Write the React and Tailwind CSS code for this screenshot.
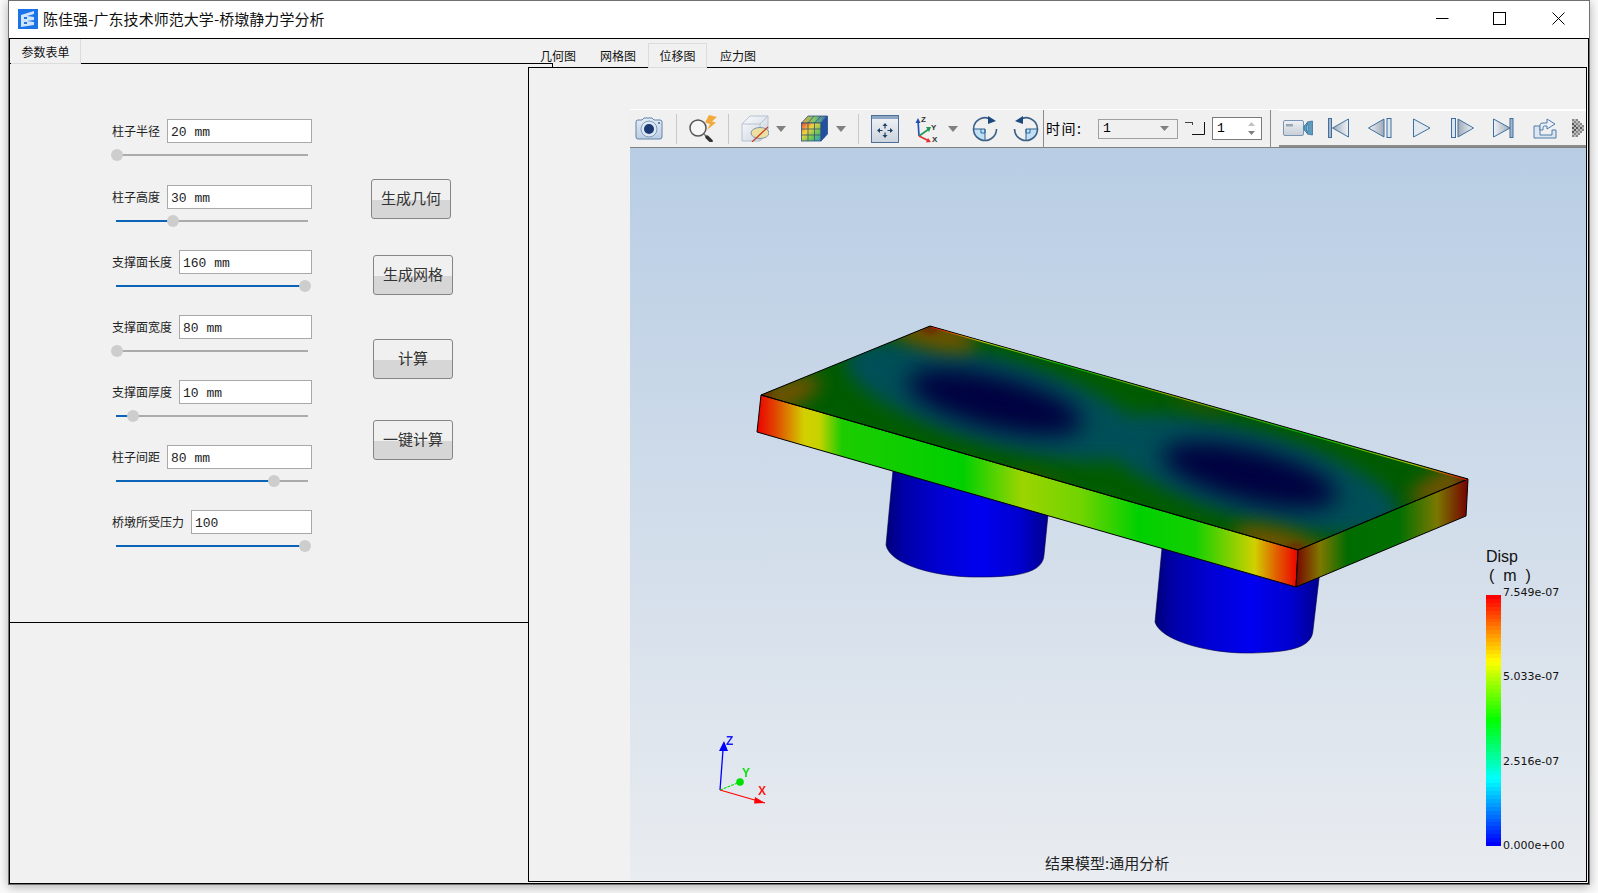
const CJK = { fontFamily: '"Noto Sans CJK SC", "Liberation Sans", sans-serif' };
const MONO = { fontFamily: '"Liberation Mono", "Noto Sans CJK SC", monospace' };

const rows = [
  { label: '柱子半径', value: '20 mm', handle: 1, h: 'h-[66px]' },
  { label: '柱子高度', value: '30 mm', handle: 57, h: 'h-[65px]' },
  { label: '支撑面长度', value: '160 mm', handle: 189, h: 'h-[65px]' },
  { label: '支撑面宽度', value: '80 mm', handle: 1, h: 'h-[65px]' },
  { label: '支撑面厚度', value: '10 mm', handle: 17, h: 'h-[65px]' },
  { label: '柱子间距', value: '80 mm', handle: 158, h: 'h-[65px]' },
  { label: '桥墩所受压力', value: '100', handle: 189, h: 'h-[65px]' },
];

function ParamRow({ label, value, handle, h }) {
  return (
    <div className={`${h} flex flex-col`}>
      <div className="flex h-[24px] items-center gap-[7px]">
        <span className="text-[12px] leading-none text-[#222] whitespace-nowrap">{label}</span>
        <div className="flex h-[24px] flex-1 items-center border border-[#a8a8a8] bg-white pl-[3px] pt-[3px] text-[13px] text-[#222]" style={MONO}>
          {value}
        </div>
      </div>
      <div className="relative ml-[4px] mt-[11px] h-[2px] w-[192px] bg-[#ababab]">
        <div className="h-[2px] bg-[#0d63b5]" style={{ width: handle }} />
        <div className="absolute top-[-5px] h-[12px] w-[12px] rounded-full bg-[#cdcdcd]" style={{ left: handle - 6 }} />
      </div>
    </div>
  );
}

function Btn({ children, className }) {
  return (
    <div className={`flex h-[40px] w-[80px] items-center justify-center rounded-[3px] border border-[#858585] bg-[linear-gradient(#f0f0f0_52%,#d6d6d6_52%)] pb-[2px] text-[15px] text-[#333] ${className}`}>
      {children}
    </div>
  );
}

function AppIcon() {
  return (
    <svg width="20" height="20" viewBox="0 0 20 20" className="shrink-0">
      <rect width="20" height="20" fill="#1a73e8" />
      <path d="M3 6 L16 2 V5 L9 7 L16 8 V11 L9 12 L16 13 V16 L3 18 Z" fill="#cfe3fb" />
      <path d="M6 8 H9 V10 H6 Z M6 13 H9 V15 H6 Z" fill="#1a73e8" />
    </svg>
  );
}

function Sep({ className, dark }) {
  return <div className={`h-[30px] w-px shrink-0 ${dark ? 'bg-[#8a8a8a]' : 'bg-[#c9c9c9]'} ${className}`} />;
}

function Caret({ className }) {
  return (
    <svg width="10" height="6" viewBox="0 0 10 6" className={`shrink-0 ${className}`}>
      <path d="M0 0 H10 L5 6 Z" fill="#808080" />
    </svg>
  );
}

function CameraIcon({ className }) {
  return (
    <svg width="28" height="23" viewBox="0 0 28 23" className={`shrink-0 ${className}`}>
      <defs>
        <linearGradient id="cam" x1="0" y1="0" x2="0" y2="1">
          <stop offset="0" stopColor="#e6edf6" />
          <stop offset="1" stopColor="#bccde2" />
        </linearGradient>
      </defs>
      <path d="M1 5 Q1 3 3 3 H7 L9 1 H17 L19 3 H25 Q27 3 27 5 V20 Q27 22 25 22 H3 Q1 22 1 20 Z" fill="url(#cam)" stroke="#5f83ab" />
      <circle cx="14" cy="12" r="8" fill="#dce7f3" stroke="#7c9cc0" />
      <circle cx="14" cy="12" r="5" fill="#1b3a72" />
      <rect x="23" y="5" width="2" height="2" fill="#5f83ab" />
    </svg>
  );
}

function SearchIcon({ className }) {
  return (
    <svg width="29" height="27" viewBox="0 0 29 27" className={`shrink-0 ${className}`}>
      <circle cx="10" cy="13" r="8" fill="#f6f6f6" stroke="#555" strokeWidth="1.5" />
      <path d="M16 19 L19 22" stroke="#777" strokeWidth="1.5" />
      <path d="M19 22 L23 26" stroke="#333" strokeWidth="3.5" strokeLinecap="round" />
      <path d="M21 0 L29 2 L24 6.5 L28 7.5 L19 15 L22 9 L17 7.5 Z" fill="#f2aa3c" />
    </svg>
  );
}

function CubeIcon({ className }) {
  return (
    <svg width="28" height="27" viewBox="0 0 28 27" className={`shrink-0 ${className}`}>
      <defs>
        <linearGradient id="cube" x1="0" y1="0" x2="1" y2="1">
          <stop offset="0" stopColor="#fbfcfd" />
          <stop offset="1" stopColor="#c9d2dd" />
        </linearGradient>
      </defs>
      <path d="M1 9 L9 1 H27 V18 L19 26 H1 Z" fill="url(#cube)" stroke="#b6c2d0" />
      <path d="M1 9 H19 V26 M19 9 L27 1" fill="none" stroke="#b6c2d0" />
      <ellipse cx="19" cy="18" rx="9" ry="5.5" fill="#ecdf9f" stroke="#7f96ae" />
      <path d="M11 27 L27 12" stroke="#c9452a" strokeWidth="1.3" />
    </svg>
  );
}

function ColorCubeIcon({ className }) {
  return (
    <svg width="27" height="27" viewBox="0 0 27 27" className={`shrink-0 ${className}`}>
      <defs>
        <linearGradient id="cc" x1="0" y1="0" x2="1" y2="1">
          <stop offset="0" stopColor="#e8443a" />
          <stop offset="0.35" stopColor="#f2d23a" />
          <stop offset="0.7" stopColor="#62c45a" />
          <stop offset="1" stopColor="#2a8fd8" />
        </linearGradient>
        <linearGradient id="ct" x1="0" y1="0" x2="1" y2="0">
          <stop offset="0" stopColor="#e8a03a" />
          <stop offset="0.5" stopColor="#7bc96c" />
          <stop offset="1" stopColor="#2e63c4" />
        </linearGradient>
      </defs>
      <path d="M0.5 8 L7 1 H26.5 L20 8 Z" fill="url(#ct)" stroke="#2d4f78" strokeWidth="0.8" />
      <rect x="0.5" y="8" width="19.5" height="18" fill="url(#cc)" stroke="#2d4f78" strokeWidth="0.8" />
      <path d="M20 8 L26.5 1 V19 L20 26 Z" fill="#1b4fb0" stroke="#2d4f78" strokeWidth="0.8" />
      <path d="M7 8 V26 M13.5 8 V26 M0.5 14 H20 M0.5 20 H20 M7 8 L13 1 M13.5 8 L20 1 M23 4.5 V23 M20 14 L26.5 7 M20 20 L26.5 13" stroke="#33507a" strokeWidth="0.8" fill="none" />
    </svg>
  );
}

function FitIcon({ className }) {
  return (
    <svg width="28" height="28" viewBox="0 0 28 28" className={`shrink-0 ${className}`}>
      <defs>
        <linearGradient id="fit" x1="0" y1="0" x2="0" y2="1">
          <stop offset="0" stopColor="#f2f4f7" />
          <stop offset="1" stopColor="#ccd3dd" />
        </linearGradient>
      </defs>
      <rect x="0.5" y="0.5" width="27" height="27" fill="url(#fit)" stroke="#4d6f97" />
      <rect x="1" y="1" width="26" height="3" fill="#8da6c4" />
      <path d="M14 8 L16.5 11 H14.6 V13.5 H13.4 V11 H11.5 Z M14 23 L16.5 20 H14.6 V17.5 H13.4 V20 H11.5 Z M6 15.5 L9 13 V14.9 H11.5 V16.1 H9 V18 Z M22 15.5 L19 13 V14.9 H16.5 V16.1 H19 V18 Z" fill="#1f4468" />
    </svg>
  );
}

function TriadIcon({ className }) {
  return (
    <svg width="24" height="28" viewBox="0 0 24 28" className={`shrink-0 ${className}`}>
      <path d="M4 21 L3 5" stroke="#1f4fb5" strokeWidth="1.6" />
      <path d="M0.5 8 L3 3 L5.5 8 Z" fill="#1f4fb5" />
      <path d="M4 21 L14 14" stroke="#1f9a55" strokeWidth="1.6" />
      <path d="M11 12 L16 12 L14 17 Z" fill="#1f9a55" />
      <path d="M4 21 L14 26" stroke="#e03030" strokeWidth="1.6" />
      <path d="M11 27.5 L16 27 L13 23 Z" fill="#e03030" />
      <text x="6" y="7" fontSize="8" fill="#333" fontFamily="Liberation Sans" fontWeight="700">Z</text>
      <text x="16" y="15" fontSize="8" fill="#333" fontFamily="Liberation Sans" fontWeight="700">Y</text>
      <text x="17" y="27" fontSize="8" fill="#333" fontFamily="Liberation Sans" fontWeight="700">X</text>
    </svg>
  );
}

function RotateIcon({ className, flip }) {
  return (
    <svg width="26" height="26" viewBox="0 0 26 26" className={`shrink-0 ${className}`} style={flip ? { transform: 'scaleX(-1)' } : undefined}>
      <path d="M13 13 H1.5 A11.5 11.5 0 0 0 13 24.5 Z" fill="#bfe0f5" />
      <path d="M13 13 V17 M9 13 V17 H13" stroke="#2f6d9e" fill="none" />
      <path d="M1.5 13 H13 V24.5" stroke="#2f5f8c" fill="none" />
      <path d="M20.5 4.5 A11.5 11.5 0 0 0 1.5 13 A11.5 11.5 0 0 0 24.5 13" fill="none" stroke="#3b5f86" strokeWidth="1.6" />
      <path d="M16 0 L24 5 L16 8 Z" fill="#1d4a7c" />
    </svg>
  );
}

function VideoIcon() {
  return (
    <svg width="30" height="16" viewBox="0 0 30 16" className="shrink-0">
      <defs>
        <linearGradient id="vid" x1="0" y1="0" x2="0" y2="1">
          <stop offset="0" stopColor="#eef1f5" />
          <stop offset="1" stopColor="#c8ced6" />
        </linearGradient>
      </defs>
      <rect x="0.5" y="0.5" width="20" height="15" rx="1.5" fill="url(#vid)" stroke="#7a95b3" />
      <rect x="3" y="4" width="7" height="2.5" fill="#9aa6b3" />
      <path d="M21 6 L24 3 V13 L21 10 Z" fill="#4ea4c9" stroke="#33688f" strokeWidth="0.7" />
      <path d="M24 2 L29.5 1 V15 L24 14 L25.5 8 Z" fill="#5f9cc0" stroke="#33688f" strokeWidth="0.7" />
    </svg>
  );
}

function Play({ w, h, className, children }) {
  return (
    <svg width={w} height={h} viewBox={`0 0 ${w} ${h}`} className={`shrink-0 ${className}`}>
      <defs>
        <linearGradient id="pl" x1="0" y1="0" x2="1" y2="0">
          <stop offset="0" stopColor="#f0f3f7" />
          <stop offset="1" stopColor="#9eaab8" />
        </linearGradient>
        <linearGradient id="pr" x1="1" y1="0" x2="0" y2="0">
          <stop offset="0" stopColor="#f0f3f7" />
          <stop offset="1" stopColor="#9eaab8" />
        </linearGradient>
      </defs>
      {children}
    </svg>
  );
}

function ExportIcon({ className }) {
  return (
    <svg width="24" height="21" viewBox="0 0 24 21" className={`shrink-0 ${className}`}>
      <path d="M1 8 H7 V17 H19 V12 H23 V20 H1 Z" fill="#dde6f0" stroke="#4f7cac" />
      <path d="M7 7 Q7 5 10 5 H14 V1 L22 6 L14 11 V8 H11 Q10 8 10 10 V12 H7 Z" fill="#eef2f7" stroke="#4f7cac" />
    </svg>
  );
}

function MoreIcon() {
  const cells = [];
  for (let y = 0; y < 9; y++) {
    for (let x = 0; x < 6; x++) {
      const d = Math.abs(y - 4) + x * 0.7;
      const on = (x + y) % 2 === 0;
      if (on && d < 6) cells.push(<rect key={`${x}-${y}`} x={x * 2} y={y * 2} width="2" height="2" fill={d < 3 ? '#555' : '#888'} />);
      else if (d < 5) cells.push(<rect key={`${x}-${y}`} x={x * 2} y={y * 2} width="2" height="2" fill="#bbb" />);
    }
  }
  return (
    <svg width="12" height="18" viewBox="0 0 12 18" className="ml-auto mr-[1px] shrink-0">{cells}</svg>
  );
}

function Toolbar() {
  const s = '#3f6f9f';
  return (
    <div className="flex h-[39px] shrink-0 items-center border-t border-t-white border-b border-b-[#808080] bg-[#f0f0f0]" style={CJK}>
      <CameraIcon className="ml-[5px]" />
      <Sep className="ml-[13px]" />
      <SearchIcon className="ml-[11px]" />
      <Sep className="ml-[11px]" />
      <CubeIcon className="ml-[12px]" />
      <Caret className="ml-[7px]" />
      <ColorCubeIcon className="ml-[15px]" />
      <Caret className="ml-[8px]" />
      <Sep className="ml-[12px]" />
      <FitIcon className="ml-[12px]" />
      <TriadIcon className="ml-[16px]" />
      <Caret className="ml-[9px]" />
      <RotateIcon className="ml-[14px]" />
      <RotateIcon className="ml-[15px]" flip />
      <Sep className="ml-[4px] !h-[38px]" dark />
      <span className="ml-[2px] w-[36px] pb-[1px] text-[14px] leading-none tracking-[1.5px] text-black whitespace-nowrap">时间:</span>
      <div className="ml-[16px] flex h-[20px] w-[80px] items-center justify-between border border-[#a0a0a0] bg-[#f0f0f0] pl-[4px] pr-[8px] text-[13px]" style={MONO}>
        <span>1</span>
        <svg width="9" height="5" viewBox="0 0 9 5"><path d="M0 0 H9 L4.5 5 Z" fill="#808080" /></svg>
      </div>
      <svg width="20" height="13" viewBox="0 0 20 13" className="ml-[7px] shrink-0">
        <path d="M0 0.5 H8 M7.5 0.5 V3" stroke="#444" fill="none" />
        <path d="M7 12.5 H19.5 V0" stroke="#111" fill="none" />
      </svg>
      <div className="ml-[7px] flex h-[23px] w-[50px] items-center justify-between border border-[#7a7a7a] bg-white pl-[4px] pr-[6px] text-[13px]" style={MONO}>
        <span>1</span>
        <svg width="7" height="13" viewBox="0 0 7 13"><path d="M3.5 0 L7 4 H0 Z" fill="#c0c0c0" /><path d="M0 9 H7 L3.5 13 Z" fill="#808080" /></svg>
      </div>
      <Sep className="ml-[8px] !h-[38px]" dark />
      <div className="ml-[8px] flex h-[37px] flex-1 items-center border-t border-t-white border-b-2 border-b-[#8c8c8c] pl-[4px] pr-[1px]">
        <VideoIcon />
        <Play w={21} h={20} className="ml-[15px]">
          <rect x="0.5" y="0.5" width="3" height="19" fill="#a9b6c5" stroke={s} />
          <path d="M4.5 10 L20.5 1 V19 Z" fill="url(#pr)" stroke={s} />
        </Play>
        <Play w={24} h={20} className="ml-[19px]">
          <path d="M0.5 10 L16 1 V19 Z" fill="url(#pl)" stroke={s} />
          <rect x="19" y="0.5" width="4" height="19" fill="#dfe5ec" stroke={s} />
        </Play>
        <Play w={18} h={20} className="ml-[21px]">
          <path d="M0.5 1 L17 10 L0.5 19 Z" fill="#e4e9f0" stroke={s} />
        </Play>
        <Play w={23} h={20} className="ml-[20px]">
          <rect x="0.5" y="0.5" width="4" height="19" fill="#dfe5ec" stroke={s} />
          <path d="M7 1 L22.5 10 L7 19 Z" fill="url(#pr)" stroke={s} />
        </Play>
        <Play w={21} h={20} className="ml-[19px]">
          <path d="M0.5 1 L17 10 L0.5 19 Z" fill="url(#pl)" stroke={s} />
          <rect x="17" y="0.5" width="3" height="19" fill="#a9b6c5" stroke={s} />
        </Play>
        <ExportIcon className="ml-[19px]" />
        <MoreIcon />
      </div>
    </div>
  );
}

function Scene() {
  const topFace = '930,326 1468,479 1298,550 761,395';
  const corners = [[930, 332, 16], [1455, 482, -22], [1280, 545, 16], [775, 398, -22]];
  return (
    <svg viewBox="630 148 956 733" width="956" height="733" className="absolute left-0 top-0 block">
      <defs>
        <linearGradient id="cyl" x1="0" y1="0" x2="1" y2="0">
          <stop offset="0" stopColor="#000078" />
          <stop offset="0.1" stopColor="#0000a6" />
          <stop offset="0.35" stopColor="#0000d6" />
          <stop offset="0.58" stopColor="#0000f0" />
          <stop offset="0.82" stopColor="#0000d0" />
          <stop offset="1" stopColor="#00008c" />
        </linearGradient>
        <linearGradient id="front" gradientUnits="userSpaceOnUse" x1="757" y1="0" x2="1298" y2="0">
          <stop offset="0" stopColor="#ee0000" />
          <stop offset="0.035" stopColor="#e04800" />
          <stop offset="0.087" stopColor="#d2d000" />
          <stop offset="0.115" stopColor="#c8d200" />
          <stop offset="0.157" stopColor="#1ccc00" />
          <stop offset="0.38" stopColor="#00d000" />
          <stop offset="0.49" stopColor="#9cd400" />
          <stop offset="0.6" stopColor="#70d400" />
          <stop offset="0.705" stopColor="#00d000" />
          <stop offset="0.81" stopColor="#14d000" />
          <stop offset="0.92" stopColor="#d0d000" />
          <stop offset="0.96" stopColor="#e06000" />
          <stop offset="1" stopColor="#ee0000" />
        </linearGradient>
        <linearGradient id="side" gradientUnits="userSpaceOnUse" x1="1296" y1="0" x2="1468" y2="0">
          <stop offset="0" stopColor="#780500" />
          <stop offset="0.14" stopColor="#7f7800" />
          <stop offset="0.3" stopColor="#006c00" />
          <stop offset="0.6" stopColor="#007000" />
          <stop offset="0.82" stopColor="#7a7800" />
          <stop offset="1" stopColor="#760000" />
        </linearGradient>
        <linearGradient id="back" gradientUnits="userSpaceOnUse" x1="930" y1="0" x2="1468" y2="0">
          <stop offset="0" stopColor="#e00000" />
          <stop offset="0.1" stopColor="#c8c800" />
          <stop offset="0.25" stopColor="#00c000" />
          <stop offset="0.45" stopColor="#a8a800" />
          <stop offset="0.7" stopColor="#00c000" />
          <stop offset="0.9" stopColor="#c8c800" />
          <stop offset="1" stopColor="#e00000" />
        </linearGradient>
        <clipPath id="topClip"><polygon points={topFace} /></clipPath>
        <filter id="b8" x="-40%" y="-60%" width="180%" height="220%"><feGaussianBlur stdDeviation="9" /></filter>
        <filter id="b12" x="-40%" y="-80%" width="180%" height="260%"><feGaussianBlur stdDeviation="12" /></filter>
        <filter id="b4" x="-60%" y="-60%" width="220%" height="220%"><feGaussianBlur stdDeviation="4" /></filter>
      </defs>

      <path d="M893 470 L886 545 C890 565 938 578 981 577 C1020 577 1043 572 1044 555 L1049 505 Z" fill="url(#cyl)" stroke="#000040" strokeWidth="0.6" />
      <path d="M1162 548 L1155 622 C1160 640 1208 654 1252 653 C1290 652 1312 648 1313 630 L1320 570 Z" fill="url(#cyl)" stroke="#000040" strokeWidth="0.6" />

      <polygon points={topFace} fill="#005c00" />
      <g clipPath="url(#topClip)">
        <g filter="url(#b8)">
          <ellipse cx="995" cy="401" rx="155" ry="44" transform="rotate(16 995 401)" fill="#005058" />
          <ellipse cx="1250" cy="474" rx="155" ry="44" transform="rotate(16 1250 474)" fill="#005058" />
        </g>
        <g filter="url(#b12)">
          <ellipse cx="995" cy="402" rx="90" ry="26" transform="rotate(14 995 402)" fill="#000040" />
          <ellipse cx="1250" cy="475" rx="90" ry="26" transform="rotate(14 1250 475)" fill="#000040" />
          <ellipse cx="995" cy="402" rx="70" ry="18" transform="rotate(14 995 402)" fill="#000040" />
          <ellipse cx="1250" cy="475" rx="70" ry="18" transform="rotate(14 1250 475)" fill="#000040" />
        </g>
        <g filter="url(#b8)">
          {corners.map(([x, y, r]) => (
            <ellipse key={x} cx={x} cy={y} rx="48" ry="16" transform={`rotate(${r} ${x} ${y})`} fill="#6e5200" />
          ))}
          <ellipse cx="1040" cy="482" rx="30" ry="5" transform="rotate(16 1040 482)" fill="#3c5000" />
          <ellipse cx="1200" cy="402" rx="30" ry="5" transform="rotate(16 1200 402)" fill="#3c5000" />
        </g>
        <g filter="url(#b4)">
          <ellipse cx="930" cy="327" rx="9" ry="4" fill="#701000" />
          <ellipse cx="1466" cy="479" rx="9" ry="4" fill="#701000" />
          <ellipse cx="1296" cy="550" rx="9" ry="4" fill="#701000" />
          <ellipse cx="762" cy="395" rx="9" ry="4" fill="#701000" />
        </g>
      </g>
      <polygon points="761,395 1298,550 1296,587 757,432" fill="url(#front)" stroke="#000" strokeWidth="1" strokeLinejoin="round" />
      <polygon points="1298,550 1468,479 1466,516 1296,587" fill="url(#side)" stroke="#000" strokeWidth="1" strokeLinejoin="round" />
      <polygon points={topFace} fill="none" stroke="#000" strokeWidth="1" strokeLinejoin="round" />
      <path d="M932 327.5 L1467 480" stroke="url(#back)" strokeWidth="1" fill="none" />

      <path d="M720 790 L723 750" stroke="#0000ff" strokeWidth="1.3" />
      <path d="M719 751 L724 741 L728 751 Z" fill="#0000ff" />
      <text x="726" y="745" fontSize="12" fontWeight="700" fill="#1818ff" fontFamily="Liberation Sans">Z</text>
      <path d="M720 790 L740 782" stroke="#00e000" strokeWidth="1.1" strokeDasharray="3 1" />
      <circle cx="740" cy="782" r="3.8" fill="#00e000" />
      <text x="742" y="777" fontSize="12" fontWeight="700" fill="#10e010" fontFamily="Liberation Sans">Y</text>
      <path d="M720 790 L765 803" stroke="#ff0000" strokeWidth="1.1" />
      <path d="M754 803.5 L755 797 L765 803 Z" fill="#ff0000" />
      <text x="758" y="795" fontSize="12" fontWeight="700" fill="#ff1818" fontFamily="Liberation Sans">X</text>
    </svg>
  );
}

function bandColor(t) {
  const stops = [[0, [255, 0, 0]], [0.26, [255, 255, 0]], [0.5, [0, 255, 0]], [0.74, [0, 255, 255]], [1, [0, 0, 255]]];
  for (let i = 0; i < stops.length - 1; i++) {
    const [a, ca] = stops[i];
    const [b, cb] = stops[i + 1];
    if (t <= b) {
      const f = (t - a) / (b - a);
      const c = ca.map((v, k) => Math.round(v + (cb[k] - v) * f));
      return `rgb(${c[0]},${c[1]},${c[2]})`;
    }
  }
  return 'rgb(0,0,255)';
}

function Legend() {
  const bands = Array.from({ length: 64 }, (_, i) => bandColor(i / 63));
  return (
    <div className="absolute left-[856px] top-[399px] flex w-[100px] flex-col">
      <div className="h-[38px] text-[16px] leading-[19px] text-[#111]" style={{ fontFamily: '"Liberation Sans", sans-serif' }}>
        Disp
        <br />
        <span className="ml-[3px] whitespace-pre">{'(  m  )'}</span>
      </div>
      <div className="mt-[1px] flex h-[266px]">
        <div className="mt-[9px] flex h-[251px] w-[15px] shrink-0 flex-col">
          {bands.map((c, i) => <div key={i} className="flex-1" style={{ background: c }} />)}
        </div>
        <div className="ml-[2px] mt-[1px] flex h-[265px] flex-col justify-between text-[11px] leading-[12px] text-[#111]" style={{ fontFamily: '"DejaVu Sans", sans-serif' }}>
          <span>7.549e-07</span>
          <span>5.033e-07</span>
          <span>2.516e-07</span>
          <span>0.000e+00</span>
        </div>
      </div>
    </div>
  );
}

function WindowControls() {
  return (
    <div className="ml-auto flex h-full items-center">
      <svg width="13" height="13" viewBox="0 0 13 13" className="mr-[44px]"><path d="M0 6.5 H12.5" stroke="#000" /></svg>
      <svg width="13" height="13" viewBox="0 0 13 13" className="mr-[46px]"><rect x="0.5" y="0.5" width="12" height="12" fill="none" stroke="#000" /></svg>
      <svg width="13" height="13" viewBox="0 0 13 13" className="mr-[24px]"><path d="M0.5 0.5 L12.5 12.5 M12.5 0.5 L0.5 12.5" stroke="#000" /></svg>
    </div>
  );
}

export default function App() {
  const tabs = ['几何图', '网格图', '位移图', '应力图'];
  return (
    <div className="h-[893px] w-[1598px] overflow-hidden bg-[#fafafa]" style={CJK}>
      <div className="relative ml-[8px] flex h-[885px] w-[1582px] flex-col border border-[#707070] bg-white shadow-[0_2px_10px_rgba(0,0,0,0.3)]">
        <div className="flex h-[37px] shrink-0 items-center bg-white pb-[2px] pl-[9px]">
          <AppIcon />
          <span className="ml-[5px] text-[15px] leading-none tracking-[0.06px] text-[#111]">陈佳强-广东技术师范大学-桥墩静力学分析</span>
          <WindowControls />
        </div>

        <div className="relative flex min-h-0 flex-1 border border-black bg-[#f1f1f1]">
          <div className="flex w-[518px] shrink-0 flex-col">
            <div className="flex h-[25px] shrink-0 border-b border-black">
              <div className="ml-[1px] flex h-[25px] w-[70px] items-center justify-center border-b border-r border-[#dcdcdc] pt-[1px] text-[12px] text-[#111]">参数表单</div>
            </div>
            <div className="flex h-[559px] shrink-0 border-b border-black pl-[102px] pt-[55px]">
              <div className="flex w-[200px] shrink-0 flex-col">
                {rows.map((r) => <ParamRow key={r.label} {...r} />)}
              </div>
              <div className="ml-[59px] flex flex-col pt-[60px]">
                <Btn>生成几何</Btn>
                <Btn className="ml-[2px] mt-[36px]">生成网格</Btn>
                <Btn className="ml-[2px] mt-[44px]">计算</Btn>
                <Btn className="ml-[2px] mt-[41px]">一键计算</Btn>
              </div>
            </div>
          </div>

          <div className="relative mb-[1px] flex w-[1059px] shrink-0 flex-col">
            <div className="relative z-10 flex h-[28px] shrink-0 items-end">
              {tabs.map((t, i) => (
                <div
                  key={t}
                  className={`-mb-px flex h-[25px] items-center justify-center text-[12px] text-[#111] ${i === 2 ? 'mr-[1px] w-[59px] border border-[#dcdcdc] bg-[#f1f1f1]' : 'w-[60px]'}`}
                >
                  {t}
                </div>
              ))}
            </div>
            <div className="flex min-h-0 flex-1 border border-black">
              <div className="w-[101px] shrink-0" />
              <div className="flex min-w-0 flex-1 flex-col pt-[41px]">
                <Toolbar />
                <div className="relative min-h-0 flex-1 overflow-hidden bg-[linear-gradient(#b8cde4,#e9ecf0)]">
                  <Scene />
                  <Legend />
                  <div className="absolute left-[415px] top-[705px] text-[15px] leading-[20px] text-[#222]">结果模型:通用分析</div>
                </div>
              </div>
            </div>
            <div className="absolute left-0 top-[24px] h-px w-[24px] bg-black" />
            <div className="absolute left-[24px] top-[24px] h-[4px] w-px bg-black" />
          </div>
        </div>
      </div>
    </div>
  );
}
